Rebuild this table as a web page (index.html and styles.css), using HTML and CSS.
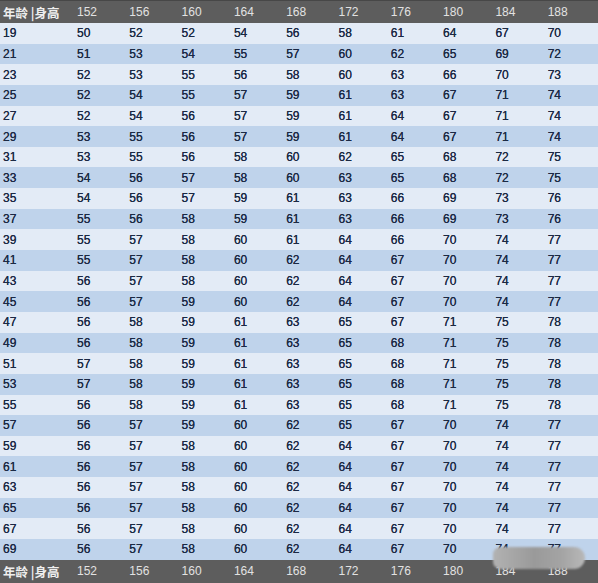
FILE: index.html
```html
<!DOCTYPE html>
<html lang="zh">
<head>
<meta charset="utf-8">
<title>年龄身高体重表</title>
<link rel="stylesheet" href="styles.css">
</head>
<body>
<div class="wrap">
<table class="chart">
<colgroup><col class="c-first"><col><col><col><col><col><col><col><col><col><col></colgroup>
<thead>
<tr class="head"><th class="label">年龄 |身高</th><th>152</th><th>156</th><th>160</th><th>164</th><th>168</th><th>172</th><th>176</th><th>180</th><th>184</th><th>188</th></tr>
</thead>
<tbody>
<tr class="lt"><td>19</td><td>50</td><td>52</td><td>52</td><td>54</td><td>56</td><td>58</td><td>61</td><td>64</td><td>67</td><td>70</td></tr>
<tr class="dk"><td>21</td><td>51</td><td>53</td><td>54</td><td>55</td><td>57</td><td>60</td><td>62</td><td>65</td><td>69</td><td>72</td></tr>
<tr class="lt"><td>23</td><td>52</td><td>53</td><td>55</td><td>56</td><td>58</td><td>60</td><td>63</td><td>66</td><td>70</td><td>73</td></tr>
<tr class="dk"><td>25</td><td>52</td><td>54</td><td>55</td><td>57</td><td>59</td><td>61</td><td>63</td><td>67</td><td>71</td><td>74</td></tr>
<tr class="lt"><td>27</td><td>52</td><td>54</td><td>56</td><td>57</td><td>59</td><td>61</td><td>64</td><td>67</td><td>71</td><td>74</td></tr>
<tr class="dk"><td>29</td><td>53</td><td>55</td><td>56</td><td>57</td><td>59</td><td>61</td><td>64</td><td>67</td><td>71</td><td>74</td></tr>
<tr class="lt"><td>31</td><td>53</td><td>55</td><td>56</td><td>58</td><td>60</td><td>62</td><td>65</td><td>68</td><td>72</td><td>75</td></tr>
<tr class="dk"><td>33</td><td>54</td><td>56</td><td>57</td><td>58</td><td>60</td><td>63</td><td>65</td><td>68</td><td>72</td><td>75</td></tr>
<tr class="lt"><td>35</td><td>54</td><td>56</td><td>57</td><td>59</td><td>61</td><td>63</td><td>66</td><td>69</td><td>73</td><td>76</td></tr>
<tr class="dk"><td>37</td><td>55</td><td>56</td><td>58</td><td>59</td><td>61</td><td>63</td><td>66</td><td>69</td><td>73</td><td>76</td></tr>
<tr class="lt"><td>39</td><td>55</td><td>57</td><td>58</td><td>60</td><td>61</td><td>64</td><td>66</td><td>70</td><td>74</td><td>77</td></tr>
<tr class="dk"><td>41</td><td>55</td><td>57</td><td>58</td><td>60</td><td>62</td><td>64</td><td>67</td><td>70</td><td>74</td><td>77</td></tr>
<tr class="lt"><td>43</td><td>56</td><td>57</td><td>58</td><td>60</td><td>62</td><td>64</td><td>67</td><td>70</td><td>74</td><td>77</td></tr>
<tr class="dk"><td>45</td><td>56</td><td>57</td><td>59</td><td>60</td><td>62</td><td>64</td><td>67</td><td>70</td><td>74</td><td>77</td></tr>
<tr class="lt"><td>47</td><td>56</td><td>58</td><td>59</td><td>61</td><td>63</td><td>65</td><td>67</td><td>71</td><td>75</td><td>78</td></tr>
<tr class="dk"><td>49</td><td>56</td><td>58</td><td>59</td><td>61</td><td>63</td><td>65</td><td>68</td><td>71</td><td>75</td><td>78</td></tr>
<tr class="lt"><td>51</td><td>57</td><td>58</td><td>59</td><td>61</td><td>63</td><td>65</td><td>68</td><td>71</td><td>75</td><td>78</td></tr>
<tr class="dk"><td>53</td><td>57</td><td>58</td><td>59</td><td>61</td><td>63</td><td>65</td><td>68</td><td>71</td><td>75</td><td>78</td></tr>
<tr class="lt"><td>55</td><td>56</td><td>58</td><td>59</td><td>61</td><td>63</td><td>65</td><td>68</td><td>71</td><td>75</td><td>78</td></tr>
<tr class="dk"><td>57</td><td>56</td><td>57</td><td>59</td><td>60</td><td>62</td><td>65</td><td>67</td><td>70</td><td>74</td><td>77</td></tr>
<tr class="lt"><td>59</td><td>56</td><td>57</td><td>58</td><td>60</td><td>62</td><td>64</td><td>67</td><td>70</td><td>74</td><td>77</td></tr>
<tr class="dk"><td>61</td><td>56</td><td>57</td><td>58</td><td>60</td><td>62</td><td>64</td><td>67</td><td>70</td><td>74</td><td>77</td></tr>
<tr class="lt"><td>63</td><td>56</td><td>57</td><td>58</td><td>60</td><td>62</td><td>64</td><td>67</td><td>70</td><td>74</td><td>77</td></tr>
<tr class="dk"><td>65</td><td>56</td><td>57</td><td>58</td><td>60</td><td>62</td><td>64</td><td>67</td><td>70</td><td>74</td><td>77</td></tr>
<tr class="lt"><td>67</td><td>56</td><td>57</td><td>58</td><td>60</td><td>62</td><td>64</td><td>67</td><td>70</td><td>74</td><td>77</td></tr>
<tr class="dk"><td>69</td><td>56</td><td>57</td><td>58</td><td>60</td><td>62</td><td>64</td><td>67</td><td>70</td><td>74</td><td>77</td></tr>
</tbody>
<tfoot>
<tr class="foot"><th class="label">年龄 |身高</th><th>152</th><th>156</th><th>160</th><th>164</th><th>168</th><th>172</th><th>176</th><th>180</th><th>184</th><th>188</th></tr>
</tfoot>
</table>
<div class="mask"></div>
</div>
</body>
</html>
```

FILE: styles.css
```css
html, body {
  margin: 0;
  padding: 0;
  background: #ffffff;
}

.wrap {
  position: relative;
  width: 598px;
  height: 583px;
  overflow: hidden;
}

.chart {
  width: 598px;
  border-collapse: collapse;
  table-layout: fixed;
  font-family: "Liberation Sans", Arial, "Noto Sans CJK SC", sans-serif;
  font-size: 12px;
}

.c-first {
  width: 75px;
}

.chart td,
.chart th {
  padding: 0 0 0 2px;
  text-align: left;
  white-space: nowrap;
  overflow: hidden;
}

.chart td:first-child,
.chart th:first-child {
  padding-left: 3px;
}

.head th,
.foot th {
  background: #5d5d5d;
  color: #e2e2e2;
  font-weight: normal;
}

.head th {
  height: 22px;
  border-top: 1px solid #474747;
}

.foot th {
  height: 23px;
}

.label {
  font-family: "Noto Sans CJK SC", "Liberation Sans", sans-serif;
  font-weight: bold !important;
  font-size: 12.5px;
  color: #eeeeee !important;
}

.chart tbody td {
  height: 20.65px;
  color: #1b2944;
  text-shadow: 0 0 0.4px #1b2944;
}

.lt td {
  background: #e3ebf6;
}

.dk td {
  background: #bfd3eb;
}

.mask {
  position: absolute;
  left: 493px;
  top: 547px;
  width: 92px;
  height: 22px;
  border-radius: 8px 12px 12px 8px;
  background: linear-gradient(90deg, #b2b2b2 0%, #9a9a9a 45%, #a4a4a4 75%, #b8b8b8 100%);
  filter: blur(1px);
}
```
